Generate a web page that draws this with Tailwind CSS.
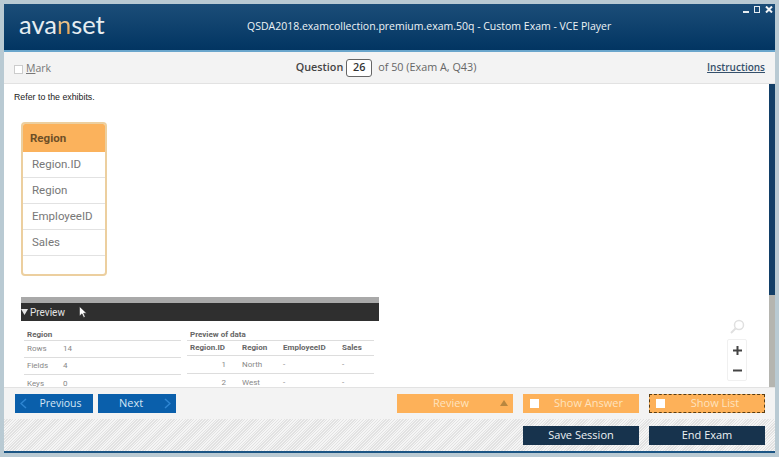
<!DOCTYPE html>
<html lang="en">
<head>
<meta charset="UTF-8">
<title>VCE Player</title>
<script src="https://cdn.jsdelivr.net/npm/@tailwindcss/browser@4"></script>
</head>
<body class="w-[779px] h-[457px] overflow-hidden bg-[#b9cad3] font-['Liberation_Sans',sans-serif]">
<div class="flex flex-col h-[457px] pt-[4px] pl-[4px] pr-[4px] pb-[4px]">
    <!-- Title bar -->
    <header class="relative flex items-center h-[48px] shrink-0 bg-gradient-to-b from-[#1b4d78] to-[#023562] border-b-2 border-[#6aa6cc]">
        <div class="w-[240px] pl-[15px] pb-[4px] text-[25.5px] leading-none text-[#e6edf1] font-['Lato',sans-serif]">ava<span class="bg-gradient-to-t from-[#e0962f] to-[#f1e3c4] bg-clip-text text-transparent">n</span>set</div>
        <div class="text-[10.5px] text-[#eef3f6] font-['Open_Sans',sans-serif] ml-[3px] pb-[1px]">QSDA2018.examcollection.premium.exam.50q - Custom Exam - VCE Player</div>
        <div class="absolute right-[2px] top-[2px] flex items-center gap-[5px]">
            <svg width="6" height="7" viewBox="0 0 6 7"><rect x="0" y="5" width="6" height="2" fill="#e6edf1"/></svg>
            <svg width="6" height="7" viewBox="0 0 6 7"><rect x="0.5" y="0.5" width="5" height="6" fill="none" stroke="#e6edf1"/></svg>
            <svg width="8" height="7" viewBox="0 0 8 7"><path d="M1 0.5L7 6.5M7 0.5L1 6.5" stroke="#f2f5f7" stroke-width="2"/></svg>
        </div>
    </header>

    <!-- Question bar -->
    <div class="flex items-center justify-between h-[32px] shrink-0 bg-[#f3f3f3] border-b border-[#e2e2e2] pl-[10px] pr-[10px] font-['Open_Sans',sans-serif]">
        <div class="flex items-center gap-[3px] w-[200px] pt-[3px] text-[10.5px] text-[#777]">
            <span class="w-[9px] h-[9px] bg-white border border-[#ccc]"></span>
            <span><span class="underline">M</span>ark</span>
        </div>
        <div class="flex items-center text-[10.8px] text-[#666] mr-[7px]">
            <span class="font-semibold text-[#444]">Question</span>
            <span class="ml-[3px] w-[26px] h-[18px] flex items-center justify-center bg-white border border-[#666] rounded-[3px] text-[#333] font-semibold">26</span>
            <span class="ml-[6px]">of 50 (Exam A, Q43)</span>
        </div>
        <a class="w-[200px] text-right text-[10px] font-semibold text-[#35506b] underline">Instructions</a>
    </div>

    <!-- Content -->
    <div class="relative flex flex-1 min-h-0 bg-white">
        <main class="flex-1 overflow-hidden pl-[10px] pt-[8px]">
            <p class="text-[8.8px] leading-[11px] text-[#222]">Refer to the exhibits.</p>
            <div class="ml-[7px] mt-[19px] w-[86px] h-[154px] rounded-[4px] border-2 border-[#eccf9f] overflow-hidden text-[11.5px] text-[#777] font-['Roboto',sans-serif]">
                <div class="h-[28px] pl-[7px] pt-[2px] flex items-center bg-[#fbb25c] font-bold text-[#6e4f27]">Region</div>
                <div class="h-[26px] pl-[9px] flex items-center border-b border-[#e2e2e2]">Region.ID</div>
                <div class="h-[26px] pl-[9px] flex items-center border-b border-[#e2e2e2]">Region</div>
                <div class="h-[26px] pl-[9px] flex items-center border-b border-[#e2e2e2]">EmployeeID</div>
                <div class="h-[26px] pl-[9px] flex items-center border-b border-[#e2e2e2]">Sales</div>
            </div>

            <div class="ml-[7px] mt-[21px] w-[358px] text-[8px] font-['Roboto',sans-serif]">
                <div class="h-[6px] bg-[#a9a9a9]"></div>
                <div class="relative h-[18px] flex items-center bg-[#2f2f2f] text-[10px] text-[#e4e4e4]">
                    <svg class="mr-[2px]" width="7" height="6" viewBox="0 0 7 6"><path d="M0 0H7L3.5 6Z" fill="#e4e4e4"/></svg>
                    <span>Preview</span>
                    <svg class="absolute left-[58px] top-[3px]" width="8" height="12" viewBox="0 0 8 12"><path d="M0.5 0.5V10L3 7.8L4.7 11.5L6.2 10.8L4.6 7.2H7.6Z" fill="#fff" stroke="#222" stroke-width="0.5"/></svg>
                </div>
                <div class="flex mt-[9px] text-[#888]">
                    <div class="ml-[3px] w-[157px]">
                        <div class="h-[11px] pl-[3px] flex items-center font-bold text-[#666] border-b border-[#ddd]">Region</div>
                        <div class="h-[17px] flex items-center pl-[3px] border-b border-[#ddd]"><span class="w-[36px]">Rows</span><span>14</span></div>
                        <div class="h-[17px] flex items-center pl-[3px] border-b border-[#ddd]"><span class="w-[36px]">Fields</span><span>4</span></div>
                        <div class="h-[17px] flex items-center pl-[3px]"><span class="w-[36px]">Keys</span><span>0</span></div>
                    </div>
                    <div class="ml-[6px] w-[187px]">
                        <div class="h-[11px] pl-[3px] flex items-center font-bold text-[#666] border-b border-[#ddd]">Preview of data</div>
                        <div class="h-[15px] flex items-center pl-[3px] font-bold text-[#666] border-b border-[#ddd]">
                            <span class="w-[52px]">Region.ID</span><span class="w-[41px]">Region</span><span class="w-[59px]">EmployeeID</span><span>Sales</span>
                        </div>
                        <div class="h-[18px] flex items-center pl-[3px] border-b border-[#ddd]">
                            <span class="w-[36px] text-right">1</span><span class="w-[16px]"></span><span class="w-[41px]">North</span><span class="w-[59px]">-</span><span>-</span>
                        </div>
                        <div class="h-[17px] flex items-center pl-[3px]">
                            <span class="w-[36px] text-right">2</span><span class="w-[16px]"></span><span class="w-[41px]">West</span><span class="w-[59px]">-</span><span>-</span>
                        </div>
                    </div>
                </div>
            </div>
        </main>

        <!-- Zoom controls -->
        <div class="absolute right-[28px] bottom-[6px] flex flex-col items-center">
            <svg width="16" height="16" viewBox="0 0 16 16"><circle cx="10" cy="6" r="4.5" fill="none" stroke="#e0e0e0" stroke-width="1.5"/><path d="M6.5 9.5L2 14" stroke="#e0e0e0" stroke-width="2"/></svg>
            <div class="mt-[4px] w-[20px] h-[42px] flex flex-col items-center justify-around border border-[#f0f0f0] rounded-[2px] text-[#444]">
                <svg width="9" height="9" viewBox="0 0 9 9"><path d="M4.5 0V9M0 4.5H9" stroke="#444" stroke-width="2"/></svg>
                <svg width="9" height="9" viewBox="0 0 9 9"><path d="M0 4.5H9" stroke="#444" stroke-width="2"/></svg>
            </div>
        </div>

        <!-- Scrollbar -->
        <div class="w-[6px] shrink-0 bg-[#b5b5b0]">
            <div class="h-[211px] bg-[#123f68]"></div>
        </div>
    </div>

    <!-- Navigation row -->
    <div class="flex items-center h-[32px] shrink-0 bg-[#f3f3f3] border-t border-[#e2e2e2] pl-[11px] pr-[10px] text-[11px] font-['Open_Sans',sans-serif]">
        <button class="relative w-[78px] h-[19px] pl-[13px] bg-[#0a5fab] text-[#d5e6f5] text-[10.5px]">
            <svg class="absolute left-[5px] top-[4px]" width="7" height="11" viewBox="0 0 7 11"><path d="M6 1L1 5.5L6 10" fill="none" stroke="#2f86d2" stroke-width="1.5"/></svg>
            Previous
        </button>
        <button class="relative ml-[5px] w-[78px] h-[19px] pr-[12px] bg-[#0a5fab] text-[#d5e6f5]">
            Next
            <svg class="absolute right-[5px] top-[4px]" width="7" height="11" viewBox="0 0 7 11"><path d="M1 1L6 5.5L1 10" fill="none" stroke="#2f86d2" stroke-width="1.5"/></svg>
        </button>
        <button class="relative ml-[221px] w-[116px] h-[19px] pr-[8px] bg-[#fdb159] text-[#fde3bf]">
            Review
            <svg class="absolute right-[5px] top-[6px]" width="8" height="6" viewBox="0 0 8 6"><path d="M4 0L8 6H0Z" fill="#b8863f"/></svg>
        </button>
        <button class="relative ml-[10px] w-[116px] h-[19px] pl-[15px] bg-[#fdb159] text-[#fde3bf]">
            <span class="absolute left-[7px] top-[5px] w-[9px] h-[9px] bg-white"></span>
            Show Answer
        </button>
        <button class="relative ml-[10px] w-[116px] h-[19px] pl-[16px] bg-[#fdb159] text-[#fde3bf] border border-dashed border-[#5a3d12]">
            <span class="absolute left-[6px] top-[4px] w-[9px] h-[9px] bg-white"></span>
            Show List
        </button>
    </div>

    <!-- Session row -->
    <div class="flex items-center justify-end h-[34px] shrink-0 pr-[10px] border-b-2 border-[#1b5584] text-[11px] text-[#eef2f5] font-['Open_Sans',sans-serif] bg-[repeating-linear-gradient(135deg,#e2e2e2_0px,#e2e2e2_1px,#f5f5f5_1px,#f5f5f5_2px)]">
        <button class="w-[116px] h-[19px] bg-[#17334d]">Save Session</button>
        <button class="ml-[10px] w-[116px] h-[19px] bg-[#17334d]">End Exam</button>
    </div>
</div>
</body>
</html>
